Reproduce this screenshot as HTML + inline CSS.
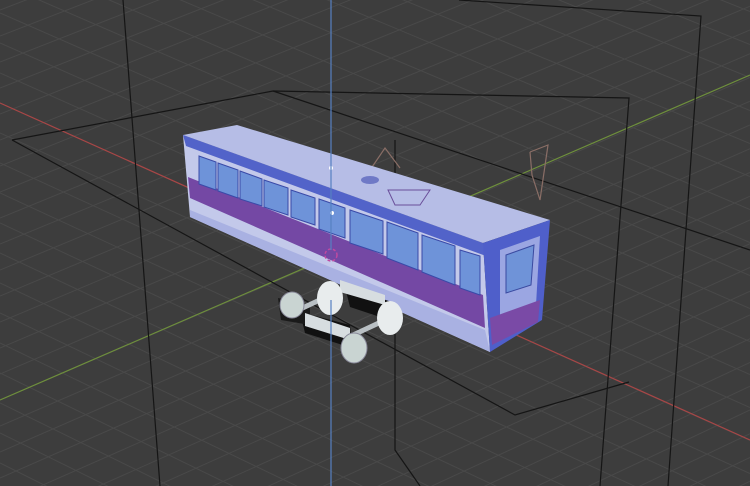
<!DOCTYPE html>
<html><head><meta charset="utf-8"><style>
html,body{margin:0;padding:0;background:#3d3d3d;overflow:hidden;width:750px;height:486px}
#wrap{position:absolute;left:0;top:0;width:750px;height:486px;overflow:hidden}
svg{display:block;overflow:hidden}
</style></head><body>
<div id="wrap">
<svg id="s" width="750" height="486" viewBox="0 0 750 486" xmlns="http://www.w3.org/2000/svg">
<defs><clipPath id="c"><rect width="750" height="486"/></clipPath></defs>
<rect width="750" height="486" fill="#3d3d3d"/>
<g clip-path="url(#c)">
<g id="grid" stroke="#494949" stroke-width="1" fill="none"></g>
<line x1="0" y1="103" x2="750" y2="440" stroke="#a84646" stroke-width="1.2"/>
<line x1="0" y1="400" x2="750" y2="75" stroke="#6e8f3c" stroke-width="1.2"/>
<g stroke="#151515" stroke-width="1.2" fill="none">
<polyline points="123,0 160,486"/>
<polyline points="459,0 701,16 668,486"/>
<polyline points="12,140 273,91 629,98 600,486"/>
<polyline points="12,140 515,415 629,382"/>
<polyline points="273,91 750,250"/>
<polyline points="395,140 395,450 420,486"/>
</g>
<g stroke="#8a6e66" stroke-width="1.2" fill="none">
<polyline points="370,170 385,148 400,168"/>
<polyline points="530,152 548,145 540,200 532,175 530,152"/>
</g>
<polygon points="183,135 237,125 550,220 483,243" fill="#b6bde6"/>
<polygon points="183,135 483,243 490,352 190,217" fill="#c3c9ea"/>
<polygon points="183,135 483,243 486,256 186,146" fill="#5263c9"/>
<polygon points="190,210 485,330 490,352 190,217" fill="#a9b1e2"/>
<polygon points="188,177 483,295 485,328 190,198" fill="#7448a4"/>
<polygon points="483,243 550,220 542,320 490,352" fill="#4f5fca"/>
<polygon points="500,250 540,236 536,305 500,320" fill="#9ba6e2"/>
<polygon points="506,255 534,245 531,285 506,293" fill="#6f93d8" stroke="#3a4aa0"/>
<polygon points="490,318 540,300 538,322 492,345" fill="#7a4aa6"/>
<g fill="#6e93d9" stroke="#3a4aa8" stroke-width="1">
<polygon points="199,156 216,162 216,190 199,184"/>
<polygon points="218,163 238,170 238,198 218,191"/>
<polygon points="240,171 262,179 262,206 240,199"/>
<polygon points="264,180 288,188 288,215 264,207"/>
<polygon points="291,190 315,198 315,225 291,217"/>
<polygon points="319,199 345,208 345,238 319,229"/>
<polygon points="350,210 383,221 383,254 350,243"/>
<polygon points="387,222 418,233 418,270 387,258"/>
<polygon points="422,235 455,246 455,285 422,272"/>
<polygon points="460,250 480,256 480,295 460,288"/>
</g>
<ellipse cx="370" cy="180" rx="9" ry="4" fill="#6f79c6"/>
<polygon points="388,190 430,190 420,205 395,205" fill="none" stroke="#6a4f9a"/>
<circle cx="331" cy="168" r="2" fill="#fff"/>
<circle cx="332" cy="213" r="2" fill="#fff"/>
<circle cx="331" cy="255" r="6" fill="none" stroke="#c04aa0" stroke-width="1.5" stroke-dasharray="3 2"/>
<polygon points="300,312 350,325 352,348 305,333" fill="#111"/>
<polygon points="345,287 392,302 395,322 350,307" fill="#111"/>
<polygon points="278,298 310,305 310,325 281,320" fill="#1a1a1a"/>
<rect x="300" y="295" width="50" height="5" fill="#b9c0c4" transform="rotate(-25 325 297)"/>
<rect x="345" y="325" width="48" height="5" fill="#b9c0c4" transform="rotate(-25 369 327)"/>
<polygon points="340,280 385,295 385,305 340,292" fill="#d7dde0"/>
<polygon points="305,313 350,328 350,340 305,326" fill="#d7dde0"/>
<ellipse cx="330" cy="298" rx="13" ry="17" fill="#e8eced"/>
<ellipse cx="292" cy="305" rx="12" ry="13" fill="#c9d4d2" stroke="#889"/>
<ellipse cx="390" cy="318" rx="13" ry="17" fill="#e8eced"/>
<ellipse cx="354" cy="348" rx="13" ry="15" fill="#c9d4d2" stroke="#889"/>
<line x1="331" y1="300" x2="331" y2="486" stroke="#5680c2" stroke-width="1.2"/>
<line x1="331" y1="0" x2="331" y2="250" stroke="#5680c2" stroke-width="1.2"/>
</g>
</svg>
</div>
<script>
(function(){
var g=document.getElementById('grid'),ns='http://www.w3.org/2000/svg';
function L(x1,y1,x2,y2){var l=document.createElementNS(ns,'line');l.setAttribute('x1',x1);l.setAttribute('y1',y1);l.setAttribute('x2',x2);l.setAttribute('y2',y2);g.appendChild(l);}
function clipY(y){return y;}
for(var i=-40;i<40;i++){var b=103+i*30;var s=0.45+i*0.004;L(0,b,750,b+750*s);}
for(var j=-30;j<60;j++){var b2=400+j*26;var s2=-0.43-j*0.003;L(0,b2,750,b2+750*s2);}
})();
</script>
</body></html>
